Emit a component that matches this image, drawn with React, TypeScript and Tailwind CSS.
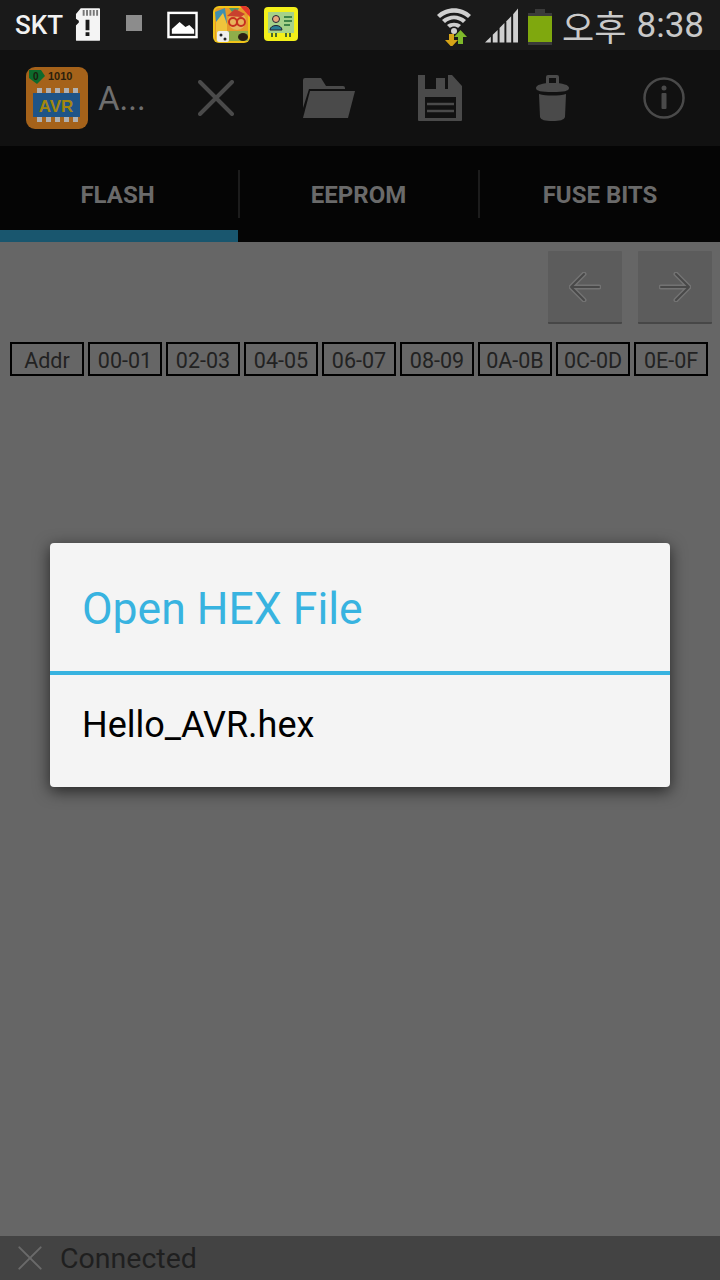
import React from 'react'

const cols = ['Addr', '00-01', '02-03', '04-05', '06-07', '08-09', '0A-0B', '0C-0D', '0E-0F']

const SdIcon = () => (
  <svg width="25" height="33" viewBox="0 0 26 34">
    <path d="M6 0H25a1 1 0 0 1 1 1V33a1 1 0 0 1-1 1H2a1 1 0 0 1-1-1V18L4 15V13L1 11V6Z" fill="#f4f4f4" />
    <path d="M8 2h2v6H8zM11.500 2h2v6h-2zM15 2h2v6h-2zM18.500 2h2v6h-2zM22 2h2v6h-2z" fill="#777" />
    <path d="M11 12h4v11h-4zM11 25h4v4h-4z" fill="#1a1a1a" />
  </svg>
)

const PictureIcon = () => (
  <svg width="31" height="28" viewBox="0 0 32 28">
    <rect x="1.500" y="1.500" width="29" height="25" fill="none" stroke="#fff" strokeWidth="2.500" />
    <path d="M5 23V18L13 11L19 16L23 14L28 19V23Z" fill="#fff" />
  </svg>
)

const GameIcon = () => (
  <svg width="37" height="37" viewBox="0 0 37 37">
    <rect width="37" height="37" rx="6" fill="#f0c419" />
    <rect x="2" y="2" width="33" height="33" rx="4" fill="#e79a2a" />
    <path d="M2 6L12 2L14 18L4 24Z" fill="#3f8fb0" />
    <path d="M16 2H26L22 10Z" fill="#4f9c6c" />
    <path d="M3 35V16L10 7L14 18L14 35Z" fill="#f0c43c" />
    <path d="M27 0H31a6 6 0 0 1 6 6V11Z" fill="#e5352c" />
    <circle cx="24" cy="15" r="9" fill="#e8b35c" />
    <path d="M14 10L22 3L32 8L28 11Z" fill="#c9412e" />
    <circle cx="20" cy="16" r="4" fill="none" stroke="#c6301f" strokeWidth="2" />
    <circle cx="28" cy="16" r="4" fill="none" stroke="#c6301f" strokeWidth="2" />
    <path d="M14 25H35V35H14Z" fill="#8fae4a" />
    <rect x="4" y="25" width="12" height="11" rx="2" fill="#eeeeee" />
    <circle cx="8" cy="29" r="1.500" fill="#222" />
    <circle cx="12" cy="33" r="1.500" fill="#222" />
    <ellipse cx="30" cy="31" rx="5" ry="4" fill="#2a1f14" />
  </svg>
)

const CardIcon = () => (
  <svg width="34" height="34" viewBox="0 0 34 34">
    <rect width="34" height="34" rx="4" fill="#f3f01a" />
    <rect x="4" y="5" width="26" height="21" fill="#a6d28a" />
    <circle cx="12" cy="12" r="3.500" fill="#e8a77c" stroke="#223" />
    <path d="M6 23C6 17 18 17 18 23Z" fill="#2c7f95" stroke="#223" />
    <path d="M20 10h8M20 14h8M20 18h6" stroke="#1e6b35" strokeWidth="1.500" />
    <path d="M8 26v4M12 26v4M22 26v4M26 26v4" stroke="#4a6b2c" strokeWidth="2" />
  </svg>
)

const WifiIcon = () => (
  <svg width="36" height="40" viewBox="0 0 36 40">
    <path d="M1 9C10 0 26 0 35 9L32 12C24 5 12 5 4 12Z" fill="#cfcfcf" />
    <path d="M6 14C13 8 23 8 30 14L27 17C21 12 15 12 9 17Z" fill="#cfcfcf" />
    <path d="M11 19C15 16 21 16 25 19L22 22C20 20 16 20 14 22Z" fill="#cfcfcf" />
    <circle cx="18" cy="25" r="3" fill="#cfcfcf" />
    <path d="M13 28h5v6h4l-6.500 7L9 34h4Z" fill="#d6a418" />
    <path d="M25 39h-5v-7h-4l6.500-7L29 32h-4Z" transform="translate(2 -1)" fill="#7fb92a" />
  </svg>
)

const SignalIcon = () => (
  <svg width="33" height="36" viewBox="0 0 34 36">
    <path d="M0 35L6 29V35Z" fill="#cfcfcf" />
    <path d="M8 27L13 22V35H8Z" fill="#cfcfcf" />
    <path d="M15 20L20 15V35H15Z" fill="#cfcfcf" />
    <path d="M22 13L27 8V35H22Z" fill="#cfcfcf" />
    <path d="M29 6L34 0V35H29Z" fill="#cfcfcf" />
  </svg>
)

const BatteryIcon = () => (
  <svg width="24" height="36" viewBox="0 0 24 36">
    <rect x="7" y="0" width="10" height="4" fill="#3a3a3a" />
    <rect x="0" y="4" width="24" height="32" fill="#3a3a3a" />
    <rect x="0" y="7" width="24" height="26" fill="#7fa80e" />
  </svg>
)

const AvrLogo = () => (
  <svg width="62" height="62" viewBox="0 0 62 62">
    <rect width="62" height="62" rx="9" fill="#a5621a" />
    <path d="M3 3H15L19 9L11 17L3 11Z" fill="#0d6a2c" />
    <rect x="7" y="26" width="47" height="24" fill="#1e5487" />
    <path d="M11 21h5v5h-5zM20 21h5v5h-5zM29 21h5v5h-5zM38 21h5v5h-5zM47 21h5v5h-5zM11 50h5v5h-5zM20 50h5v5h-5zM29 50h5v5h-5zM38 50h5v5h-5zM47 50h5v5h-5z" fill="#b0b0b0" />
    <text x="7" y="13" fontSize="10" fontWeight="700" fill="#1c1c0c" fontFamily="Liberation Sans, sans-serif">0</text>
    <text x="22" y="13" fontSize="11" fontWeight="700" fill="#2b1f0c" fontFamily="Liberation Sans, sans-serif">1010</text>
    <text x="30" y="45" fontSize="17" fontWeight="700" fill="#a3870f" textAnchor="middle" fontFamily="Liberation Sans, sans-serif">AVR</text>
  </svg>
)

const CloseIcon = ({ size, color, width }: { size: number; color: string; width: number }) => (
  <svg width={size} height={size} viewBox="0 0 36 36">
    <path d="M2 2L34 34M34 2L2 34" stroke={color} strokeWidth={width} strokeLinecap="round" />
  </svg>
)

const FolderIcon = () => (
  <svg width="52" height="41" viewBox="0 0 52 41" fill="#4a4a4a">
    <path d="M0 2a2 2 0 0 1 2-2H18L23 8H40a2 2 0 0 1 2 2V11H6L0 30Z" />
    <path d="M7 13H52L45 40H0Z" />
  </svg>
)

const SaveIcon = () => (
  <svg width="44" height="46" viewBox="0 0 44 46">
    <path d="M0 0H34L44 11V45a1 1 0 0 1-1 1H1a1 1 0 0 1-1-1Z" fill="#4a4a4a" />
    <rect x="7" y="0" width="23" height="14" fill="#111" />
    <rect x="18" y="3" width="9" height="11" fill="#4a4a4a" />
    <rect x="7" y="22" width="31" height="21" fill="#111" />
    <path d="M9 29H36M9 36H36" stroke="#4a4a4a" strokeWidth="2.500" />
  </svg>
)

const TrashIcon = () => (
  <svg width="33" height="46" viewBox="0 0 33 46" fill="#4a4a4a">
    <path d="M10 9V2a2 2 0 0 1 2-2h9a2 2 0 0 1 2 2V9H20V3H13V9Z" />
    <path d="M0 13C0 10 6 8 16.500 8S33 10 33 13 28 17 16.500 17 0 16 0 13Z" />
    <path d="M3 19C10 21 23 21 30 19L29 42C28 45 24 46 16.500 46S5 45 4 42Z" />
  </svg>
)

const InfoIcon = () => (
  <svg width="42" height="42" viewBox="0 0 42 42">
    <circle cx="21" cy="21" r="19.500" fill="none" stroke="#4a4a4a" strokeWidth="2.500" />
    <circle cx="21" cy="11" r="2.500" fill="#4a4a4a" />
    <rect x="18.500" y="16" width="5" height="16" rx="1" fill="#4a4a4a" />
  </svg>
)

const ArrowIcon = ({ flip }: { flip?: boolean }) => (
  <svg width="32" height="30" viewBox="0 0 32 30" className={flip ? 'rotate-180' : ''}>
    <path d="M15 2L2 15L15 28M2 15H30" fill="none" stroke="#737373" strokeWidth="5" strokeLinejoin="round" strokeLinecap="round" />
    <path d="M15 2L2 15L15 28M2 15H30" fill="none" stroke="#484848" strokeWidth="2" strokeLinejoin="round" strokeLinecap="round" />
  </svg>
)

export default function App() {
  return (
    <div className='relative flex h-[1280px] w-[720px] flex-col overflow-hidden bg-[#666666] font-["Roboto","Liberation_Sans",sans-serif]'>
      {/* status bar */}
      <div className="flex h-[50px] items-center bg-[#1a1a1a] pl-[15px] pr-[16px]">
        <span className="text-[26px] font-medium leading-none text-[#f2f2f2]">SKT</span>
        <div className="ml-[12px] mt-[-2px]"><SdIcon /></div>
        <div className="ml-[26px] mt-[-4px] h-[16px] w-[16px] bg-[#8c8c8c]" />
        <div className="ml-[25px]"><PictureIcon /></div>
        <div className="ml-[15px] mt-[-1px]"><GameIcon /></div>
        <div className="ml-[14px] mt-[-2px]"><CardIcon /></div>
        <div className="ml-auto mt-[1px]"><WifiIcon /></div>
        <div className="ml-[13px] mt-[2px]"><SignalIcon /></div>
        <div className="ml-[10px] mt-[4px]"><BatteryIcon /></div>
        <span className='ml-[10px] text-[35px] leading-none text-[#c9c9c9] font-["Noto_Sans_CJK_KR",sans-serif]'>오후</span>
        <span className="ml-[10px] text-[35px] leading-none text-[#c9c9c9]">8:38</span>
      </div>

      {/* action bar */}
      <div className="flex h-[96px] items-center bg-[#111111]">
        <div className="ml-[26px]"><AvrLogo /></div>
        <span className="ml-[10px] w-[60px] text-[33px] leading-none text-[#6e6e6e]">A...</span>
        <div className="ml-[28px] flex w-[60px] justify-center"><CloseIcon size={36} color="#4a4a4a" width={4} /></div>
        <div className="ml-[53px] flex w-[60px] justify-center"><FolderIcon /></div>
        <div className="ml-[51px] flex w-[60px] justify-center"><SaveIcon /></div>
        <div className="ml-[52px] flex w-[60px] justify-center"><TrashIcon /></div>
        <div className="ml-[52px] flex w-[60px] justify-center"><InfoIcon /></div>
      </div>

      {/* tabs */}
      <div className="flex h-[96px] bg-[#050505]">
        {['FLASH', 'EEPROM', 'FUSE BITS'].map((tab, i) => (
          <div key={tab} className={`relative flex w-[240px] items-center justify-center pt-[2px] ${i === 0 ? 'pr-[5px]' : i === 1 ? 'pr-[3px]' : ''}`}>
            <span className="text-[24px] font-bold text-[#6a6a6a]">{tab}</span>
            {i < 2 && <div className="absolute right-[0px] top-[24px] h-[48px] w-[2px] bg-[#1c1c1c]" />}
            {i === 0 && <div className="absolute bottom-0 left-0 h-[12px] w-[238px] bg-[#19566e]" />}
          </div>
        ))}
      </div>

      {/* hex view */}
      <div className="flex-1">
        <div className="flex justify-end gap-[16px] pr-[8px] pt-[9px]">
          <div className="flex h-[73px] w-[74px] items-center justify-center rounded-[1px] border-b-2 border-[#474747] bg-[#5c5c5c]"><ArrowIcon /></div>
          <div className="flex h-[73px] w-[74px] items-center justify-center rounded-[1px] border-b-2 border-[#474747] bg-[#5c5c5c]"><ArrowIcon flip /></div>
        </div>
        <div className="ml-[10px] mt-[18px] flex gap-[4px]">
          {cols.map(c => (
            <div key={c} className="flex h-[34px] w-[74px] items-center justify-center border-2 border-black pt-[3px] text-[21.500px] leading-none text-[#222222]">{c}</div>
          ))}
        </div>
      </div>

      {/* connection bar */}
      <div className="flex h-[44px] items-center bg-[#434343] pl-[18px]">
        <CloseIcon size={24} color="#6a6a6a" width={3} />
        <span className="ml-[18px] pt-[3px] text-[28.500px] leading-none text-[#1f1f1f]">Connected</span>
      </div>

      {/* dialog */}
      <div className="absolute left-[50px] top-[543px] w-[620px] rounded-[4px] bg-[#f4f4f4] shadow-[0_4px_16px_rgba(0,0,0,0.65)]">
        <div className="flex h-[128px] items-center pl-[32px] pt-[4px] text-[44.500px] leading-none text-[#38b3e0]">Open HEX File</div>
        <div className="h-[4px] bg-[#38b3e0]" />
        <div className="flex h-[112px] items-center pb-[12px] pl-[32px] text-[36px] leading-none text-black">Hello_AVR.hex</div>
      </div>
    </div>
  )
}
